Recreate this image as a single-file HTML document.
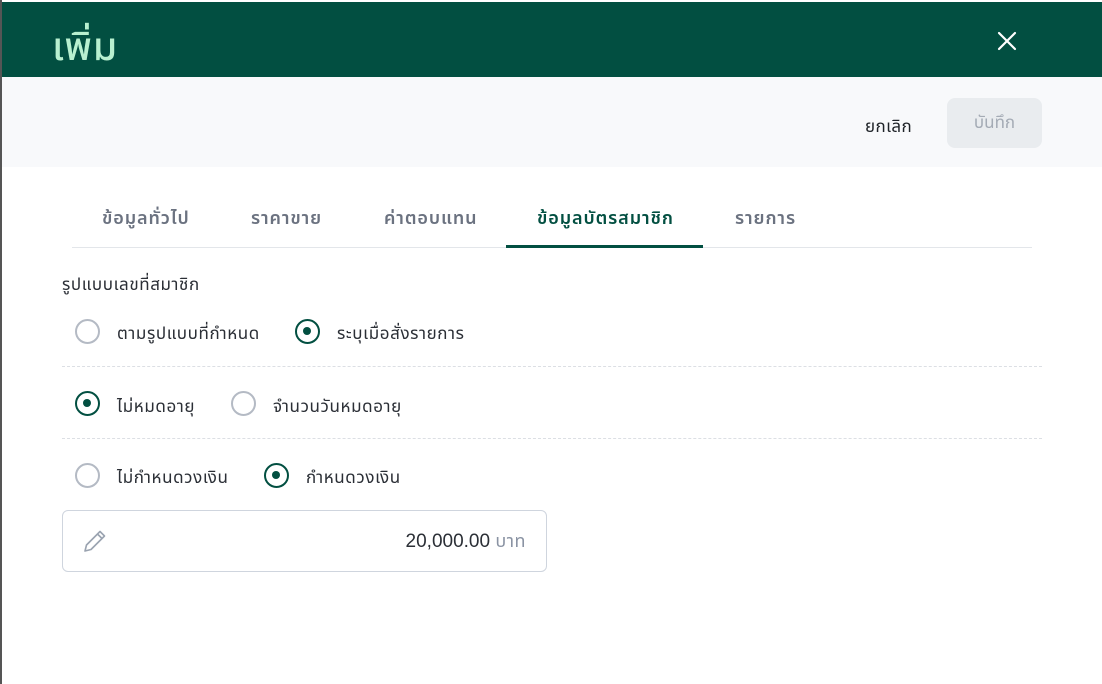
<!DOCTYPE html>
<html><head><meta charset="utf-8"><style>
*{margin:0;padding:0;box-sizing:border-box}
body{width:1102px;height:684px;overflow:hidden;background:#fff;font-family:"Liberation Sans","Noto Sans Thai","Tlwg Typo",sans-serif;color:#2b2f36;position:relative}
.abs{position:absolute;white-space:nowrap}
.edge{left:0;top:0;width:2px;height:684px;background:#555}
.hdr{left:2px;top:2px;width:1100px;height:75px;background:#024f41}
.title{left:52px;top:19px;font-size:39px;color:#b8f0d0;font-weight:500;letter-spacing:1px}
.bar{left:2px;top:77px;width:1100px;height:90px;background:#f8f9fb}
.tab{top:206px;font-size:18px;color:#6b7280;font-weight:600;letter-spacing:0.9px}
.radio{width:25px;height:25px;border-radius:50%;border:2px solid #b4bac4;background:#fff}
.radio.on{border:2.5px solid #024f41}
.radio.on::after{content:"";position:absolute;left:6px;top:6px;width:8px;height:8px;border-radius:50%;background:#024f41}
.lbl{font-size:17px;color:#2b2f36;letter-spacing:0.6px}
.dash{left:62px;width:980px;border-top:1px dashed #dcdfe4}
</style></head><body>
<div class="abs edge"></div>
<div class="abs hdr"></div>
<div class="abs title">เพิ่ม</div>
<svg class="abs" style="left:996px;top:30px" width="22" height="22" viewBox="0 0 22 22"><path d="M3 3L19 19M19 3L3 19" stroke="#fff" stroke-width="2.2" stroke-linecap="round"/></svg>
<div class="abs bar"></div>
<div class="abs" style="left:865px;top:114px;font-size:17px;color:#1f2328;letter-spacing:0.4px">ยกเลิก</div>
<div class="abs" style="left:947px;top:98px;width:95px;height:50px;background:#e9ecef;border-radius:8px;color:#a4abb5;font-size:17px;text-align:center;line-height:50px">บันทึก</div>
<div class="abs tab" style="left:102px">ข้อมูลทั่วไป</div>
<div class="abs tab" style="left:251px">ราคาขาย</div>
<div class="abs tab" style="left:384px">ค่าตอบแทน</div>
<div class="abs tab" style="left:537px;color:#024f41">ข้อมูลบัตรสมาชิก</div>
<div class="abs tab" style="left:735px">รายการ</div>
<div class="abs" style="left:72px;top:247px;width:960px;height:1px;background:#e3e6ea"></div>
<div class="abs" style="left:506px;top:245px;width:197px;height:3px;background:#024f41"></div>
<div class="abs lbl" style="left:62px;top:272px">รูปแบบเลขที่สมาชิก</div>
<div class="abs radio" style="left:75px;top:319px"></div><div class="abs lbl" style="left:117px;top:321px">ตามรูปแบบที่กำหนด</div>
<div class="abs radio on" style="left:295px;top:319px"></div><div class="abs lbl" style="left:337px;top:321px">ระบุเมื่อสั่งรายการ</div>
<div class="abs dash" style="top:366px"></div>
<div class="abs radio on" style="left:75px;top:391px"></div><div class="abs lbl" style="left:117px;top:394px">ไม่หมดอายุ</div>
<div class="abs radio" style="left:231px;top:391px"></div><div class="abs lbl" style="left:273px;top:394px">จำนวนวันหมดอายุ</div>
<div class="abs dash" style="top:438px"></div>
<div class="abs radio" style="left:75px;top:463px"></div><div class="abs lbl" style="left:117px;top:465px">ไม่กำหนดวงเงิน</div>
<div class="abs radio on" style="left:264px;top:463px"></div><div class="abs lbl" style="left:306px;top:465px">กำหนดวงเงิน</div>
<div class="abs" style="left:62px;top:510px;width:485px;height:62px;border:1px solid #cfd5de;border-radius:6px"></div>
<svg class="abs" style="left:82px;top:528px" width="26" height="26" viewBox="0 0 26 26"><path d="M3 23L4.5 17L18 3.5L22.5 8L9 21.5Z M15.5 6L20 10.5" fill="none" stroke="#9aa3b0" stroke-width="1.6" stroke-linejoin="round"/></svg>
<div class="abs" style="left:300px;top:529px;width:226px;text-align:right;font-size:19px;color:#2b2f36">20,000.00 <span style="color:#8a93a3;font-size:18px;letter-spacing:0.5px">บาท</span></div>
</body></html>
